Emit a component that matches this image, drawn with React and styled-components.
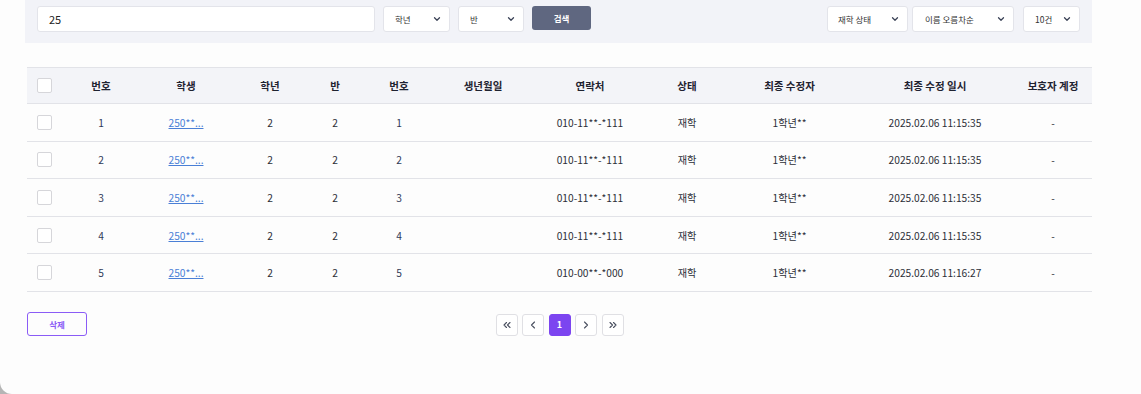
import styled, { createGlobalStyle } from "styled-components"
import { ChevronDown, ChevronLeft, ChevronRight, ChevronsLeft, ChevronsRight } from "lucide-react"

const GlobalStyle = createGlobalStyle`
    html, body {
        margin: 0;
        padding: 0;
        background: #b5b5b5;
    }
    * {
        box-sizing: border-box;
    }
`

const Page = styled.div`
    width: 1141px;
    height: 394px;
    background: #fdfdfd;
    border-bottom-left-radius: 12px;
    padding: 0 49px 0 27px;
    font-family: "Noto Sans CJK KR", "Noto Sans", sans-serif;
    color: #333;
    overflow: hidden;
`

const FilterBar = styled.div`
    height: 43px;
    margin-left: -2px;
    background: #f2f3f8;
    display: flex;
    align-items: flex-start;
    padding: 6px 12px 0 12px;
`

const Group = styled.div`
    display: flex;
    align-items: flex-start;
    gap: ${p => p.$gap || 8}px;
`

const SearchInput = styled.div`
    width: 338px;
    height: 26px;
    background: #fff;
    border: 1px solid #e3e4ea;
    border-radius: 3px;
    display: flex;
    align-items: center;
    padding-left: 11px;
    font-size: 11px;
    color: #222;
`

const Select = styled.div`
    width: ${p => p.$w}px;
    height: 26px;
    background: #fff;
    border: 1px solid #e3e4ea;
    border-radius: 3px;
    display: flex;
    align-items: center;
    justify-content: space-between;
    padding: 0 7px 0 ${p => p.$pl || 11}px;
    font-size: 8.5px;
    color: #333;
`

const SearchButton = styled.div`
    width: 59px;
    height: 24px;
    background: #5f6780;
    border-radius: 3px;
    color: #fff;
    font-size: 8.5px;
    font-weight: 700;
    display: flex;
    align-items: center;
    justify-content: center;
`

const Spacer = styled.div`
    flex: 1;
`

const Table = styled.div`
    margin-top: 24px;
`

const Row = styled.div`
    display: grid;
    grid-template-columns: 34px 80px 90px 78px 52px 76px 92px 122px 72px 133px 158px 78px;
    height: ${p => (p.$head ? "37px" : "37.6px")};
    align-items: center;
    border-bottom: 1px solid #e2e3e8;
    border-top: ${p => (p.$head ? "1px solid #e2e3e8" : "none")};
    background: ${p => (p.$head ? "#f3f4f8" : "transparent")};
    font-size: ${p => (p.$head ? "10.5px" : "10.2px")};
    font-weight: ${p => (p.$head ? 600 : 400)};
    color: ${p => (p.$head ? "#1e2230" : "#2c2f38")};
`

const Cell = styled.div`
    display: flex;
    justify-content: center;
    white-space: nowrap;
    color: ${p => p.$color || "inherit"};
    &:first-child {
        justify-content: flex-end;
        padding-right: 9px;
    }
`

const Check = styled.div`
    width: 15px;
    height: 15px;
    border: 1px solid #d6d6da;
    border-radius: 2px;
    background: #fff;
`

const StudentLink = styled.span`
    color: #4a7fd6;
    text-decoration: underline;
`

const Footer = styled.div`
    display: grid;
    grid-template-columns: 1fr auto 1fr;
    align-items: start;
    margin-top: 20px;
`

const DeleteButton = styled.div`
    width: 60px;
    height: 24px;
    border: 1px solid #8b5cf6;
    border-radius: 3px;
    color: #8b5cf6;
    font-size: 8.5px;
    font-weight: 700;
    display: flex;
    align-items: center;
    justify-content: center;
`

const Pager = styled.div`
    display: flex;
    gap: 4.5px;
    margin-top: 2px;
`

const PageButton = styled.div`
    width: 22px;
    height: 22px;
    border-radius: 3px;
    border: 1px solid ${p => (p.$active ? "#7c45f0" : "#e0e0e4")};
    background: ${p => (p.$active ? "#7c45f0" : "#fff")};
    color: ${p => (p.$active ? "#fff" : "#4a5060")};
    font-size: 9px;
    font-weight: 700;
    display: flex;
    align-items: center;
    justify-content: center;
`

const rows = [
  { no: 1, cls: 1, phone: "010-11**-*111", time: "2025.02.06 11:15:35" },
  { no: 2, cls: 2, phone: "010-11**-*111", time: "2025.02.06 11:15:35" },
  { no: 3, cls: 3, phone: "010-11**-*111", time: "2025.02.06 11:15:35" },
  { no: 4, cls: 4, phone: "010-11**-*111", time: "2025.02.06 11:15:35" },
  { no: 5, cls: 5, phone: "010-00**-*000", time: "2025.02.06 11:16:27" },
]

const Chevron = () => <ChevronDown size={10} strokeWidth={3} color="#3a4256" />

const App = () => {
  return (
    <Page>
      <GlobalStyle />
      <FilterBar>
        <Group>
          <SearchInput>25</SearchInput>
          <Select $w={67}>학년 <Chevron /></Select>
          <Select $w={66}>반 <Chevron /></Select>
          <SearchButton>검색</SearchButton>
        </Group>
        <Spacer />
        <Group $gap={4}>
          <Select $w={81} $pl={10}>재학 상태 <Chevron /></Select>
          <Select $w={102} $pl={12}>이름 오름차순 <Chevron /></Select>
          <Select $w={57} $pl={11} style={{ marginLeft: 5 }}>10건 <Chevron /></Select>
        </Group>
      </FilterBar>

      <Table>
        <Row $head>
          <Cell><Check /></Cell>
          <Cell>번호</Cell>
          <Cell>학생</Cell>
          <Cell>학년</Cell>
          <Cell>반</Cell>
          <Cell>번호</Cell>
          <Cell>생년월일</Cell>
          <Cell>연락처</Cell>
          <Cell>상태</Cell>
          <Cell>최종 수정자</Cell>
          <Cell>최종 수정 일시</Cell>
          <Cell>보호자 계정</Cell>
        </Row>
        {rows.map(r => (
          <Row key={r.no}>
            <Cell><Check /></Cell>
            <Cell $color="#2f3a58">{r.no}</Cell>
            <Cell><StudentLink>250**...</StudentLink></Cell>
            <Cell>2</Cell>
            <Cell>2</Cell>
            <Cell $color="#2f3a58">{r.cls}</Cell>
            <Cell></Cell>
            <Cell>{r.phone}</Cell>
            <Cell>재학</Cell>
            <Cell>1학년**</Cell>
            <Cell>{r.time}</Cell>
            <Cell>-</Cell>
          </Row>
        ))}
      </Table>

      <Footer>
        <DeleteButton>삭제</DeleteButton>
        <Pager>
          <PageButton><ChevronsLeft size={12} strokeWidth={2.2} /></PageButton>
          <PageButton><ChevronLeft size={12} strokeWidth={2.2} /></PageButton>
          <PageButton $active>1</PageButton>
          <PageButton><ChevronRight size={12} strokeWidth={2.2} /></PageButton>
          <PageButton><ChevronsRight size={12} strokeWidth={2.2} /></PageButton>
        </Pager>
        <div />
      </Footer>
    </Page>
  )
}

export default App
